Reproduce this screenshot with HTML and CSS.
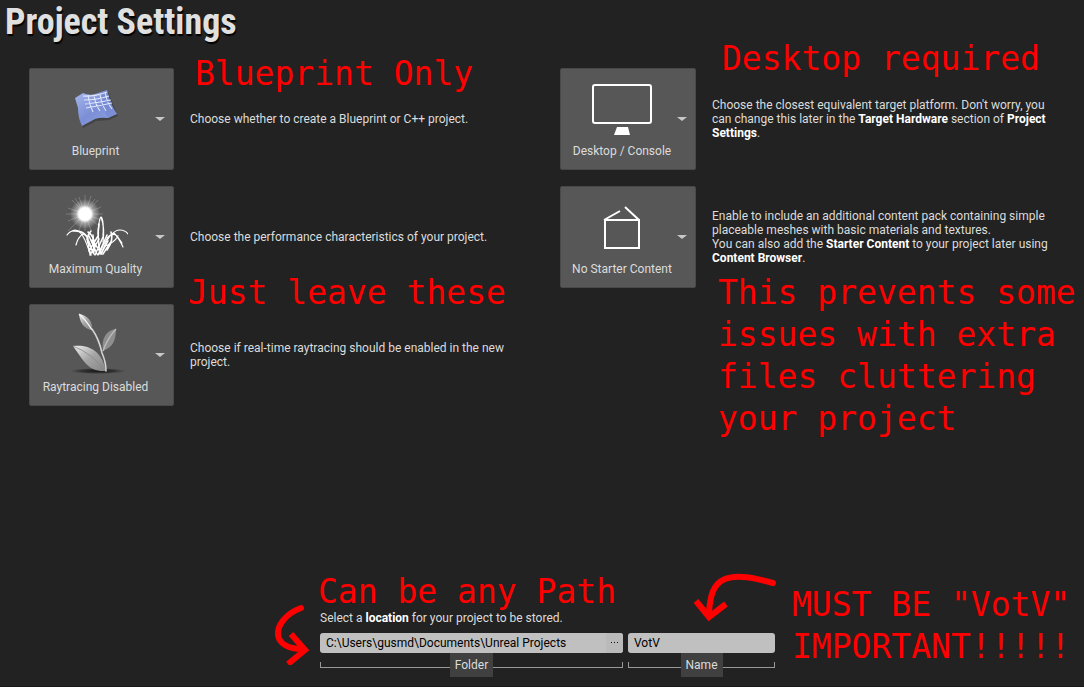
FILE: index.html
```
<!DOCTYPE html>
<html lang="en">
<head>
<meta charset="utf-8">
<meta name="viewport" content="width=device-width, initial-scale=1">
<title>Project Settings</title>
<link rel="stylesheet" href="styles.css">
</head>
<body>
<main class="page">
  <h1 class="title">Project Settings</h1>

  <div class="settings">
    <section class="column">
      <div class="setting">
        <button class="tile" type="button" aria-haspopup="listbox">
          <span class="choice">
            <svg class="icon" viewBox="0 0 64 64" aria-hidden="true">
              <defs>
                <linearGradient id="paper" x1="0" y1="0" x2="1" y2="1"><stop offset="0" stop-color="#a9b9ee"/><stop offset=".5" stop-color="#7c8fd6"/><stop offset="1" stop-color="#8fa2e4"/></linearGradient>
              </defs>
              <path d="M12 24L20 19L32 20L44 16L54 40L45 44L32 45L19 52L17 42Z" fill="#333" opacity=".55"/>
              <path d="M11 22L19 17Q25 20 31 18L43 14Q46 28 53 38L44 42Q36 41 31 43L18 50Q14 42 14 32Z" fill="url(#paper)"/>
              <path d="M31 18L43 14Q46 28 53 38L44 42Q38 32 37 17Z" fill="#667bc5" opacity=".35"/>
              <path d="M19 20Q30 21 43 16M20 24Q33 24 45 20M21 28Q33 27 47 24M22 32Q35 30 48 27M24 19Q25 28 29 36M30 19Q31 28 36 35M36 18Q37 27 42 35M41 16Q43 27 48 33" fill="none" stroke="#e9efff" stroke-width="1.1" opacity=".9"/>
            </svg>
            <span>Blueprint</span>
          </span>
          <span class="caret"></span>
        </button>
        <p class="description">Choose whether to create a Blueprint or C++ project.</p>
        <p class="note note-blueprint">Blueprint Only</p>
      </div>

      <div class="setting">
        <button class="tile" type="button" aria-haspopup="listbox">
          <span class="choice">
            <svg class="icon" viewBox="0 0 64 64" aria-hidden="true">
              <defs>
                <radialGradient id="sun"><stop offset="0" stop-color="#fff"/><stop offset=".42" stop-color="#fff"/><stop offset=".6" stop-color="#fff" stop-opacity=".45"/><stop offset="1" stop-color="#fff" stop-opacity="0"/></radialGradient>
              </defs>
              <circle cx="21" cy="20" r="15" fill="url(#sun)"/>
              <path d="M21 20V1M21 20V37M21 20H2M21 20H39M21 20L8 6M21 20L34 6M21 20L4 37M21 20L35 32M21 20L15 3M21 20L27 2M21 20L4 14M21 20L37 13M21 20L4 27M21 20L37 26M21 20L15 36M21 20L27 36M21 20L11 4M21 20L31 5" stroke="#fff" stroke-width=".7" opacity=".3"/>
              <g fill="none" stroke="#fff" stroke-width="1.2" stroke-linecap="round">
                <path d="M26 60Q19 36 11 36Q6 37 3 41M12 51Q14 43 19 40Q24 41 29 59M34 40Q35 24 37 23Q40 25 39 42M37 23Q41 34 39 48" />
                <path d="M38 58Q46 36 56 36Q61 36 64 40M36 59Q42 42 50 39Q55 44 59 53M43 44Q48 38 53 42L58 49M41 52Q50 49 54 42"/>
                <path d="M9 37Q19 36 24 44M27 37Q21 43 25 52M24 38Q30 41 31 53M35 30Q33 42 36 60M47 38Q50 46 43 56" stroke-width="1.6"/>
                <path d="M23 45L30 60M25 42L33 60M29 41L30 58M34 42L25 57M35 45L26 61M39 43L31 61M43 41L34 61M44 47L37 60M46 49L39 60M24 52L27 61M28 46L38 60" stroke-width="1.5"/>
              </g>
            </svg>
            <span>Maximum Quality</span>
          </span>
          <span class="caret"></span>
        </button>
        <p class="description">Choose the performance characteristics of your project.</p>
        <p class="note note-leave">Just leave these</p>
      </div>

      <div class="setting">
        <button class="tile" type="button" aria-haspopup="listbox">
          <span class="choice">
            <svg class="icon" viewBox="0 0 64 64" aria-hidden="true">
              <defs>
                <linearGradient id="leaf" x1="0" y1="0" x2="1" y2="1"><stop offset="0" stop-color="#eee"/><stop offset=".5" stop-color="#a5a5a5"/><stop offset="1" stop-color="#858585"/></linearGradient>
                <radialGradient id="shade"><stop offset="0" stop-color="#151515"/><stop offset=".6" stop-color="#292929" stop-opacity=".8"/><stop offset="1" stop-color="#333" stop-opacity="0"/></radialGradient>
              </defs>
              <ellipse cx="34" cy="59" rx="28" ry="3" fill="url(#shade)"/>
              <path d="M15 2C23 3 29 9 28 18C20 17 16 11 15 2Z" fill="url(#leaf)"/>
              <path d="M15 2Q22 8 28 18" fill="none" stroke="#f6f6f6" stroke-width="1.2"/>
              <path d="M52 17C42 18 37 27 39 39C49 35 52 28 52 17Z" fill="#8e8e8e"/>
              <path d="M52 17Q43 27 39 39" fill="none" stroke="#bbb" stroke-width="1.4"/>
              <path d="M9 34C24 32 38 38 42 59C24 60 20 49 9 34Z" fill="url(#leaf)"/>
              <path d="M9 34Q29 42 40 58" fill="none" stroke="#888" stroke-width=".8"/>
              <path d="M28 17Q35 27 38 41Q42 50 42 59" fill="none" stroke="#d4d4d4" stroke-width="1.6" stroke-linecap="round"/>
            </svg>
            <span>Raytracing Disabled</span>
          </span>
          <span class="caret"></span>
        </button>
        <p class="description">Choose if real-time raytracing should be enabled in the new project.</p>
      </div>
    </section>

    <section class="column column-narrow">
      <div class="setting">
        <button class="tile" type="button" aria-haspopup="listbox">
          <span class="choice">
            <svg class="icon" viewBox="0 0 64 64" aria-hidden="true">
              <rect x="3" y="9" width="58" height="38" rx="2" fill="none" stroke="#fff" stroke-width="2"/>
              <path d="M27 51H38L40 59H24Z" fill="#fff"/>
            </svg>
            <span>Desktop / Console</span>
          </span>
          <span class="caret"></span>
        </button>
        <p class="description">Choose the closest equivalent target platform. Don't worry, you can change this later in the <b>Target Hardware</b> section of <b>Project Settings</b>.</p>
        <p class="note note-desktop">Desktop required</p>
      </div>

      <div class="setting">
        <button class="tile" type="button" aria-haspopup="listbox">
          <span class="choice">
            <svg class="icon" viewBox="0 0 64 64" aria-hidden="true">
              <path d="M15 26H49V54H15ZM14 26L30 17M35 13L49 26" fill="none" stroke="#fff" stroke-width="2"/>
            </svg>
            <span>No Starter Content</span>
          </span>
          <span class="caret"></span>
        </button>
        <p class="description">Enable to include an additional content pack containing simple placeable meshes with basic materials and textures.<br>You can also add the <b>Starter Content</b> to your project later using <b>Content Browser</b>.</p>
        <p class="note note-clutter">This prevents some<br>issues with extra<br>files cluttering<br>your project</p>
      </div>
    </section>
  </div>

  <form class="location">
    <p class="location-text">Select a <b>location</b> for your project to be stored.</p>
    <div class="fields">
      <div class="field">
        <div class="box">
          <input id="folder" class="input" type="text" value="C:\Users\gusmd\Documents\Unreal Projects" spellcheck="false">
          <button class="browse" type="button" aria-label="Browse"><svg width="8" height="2" viewBox="0 0 8 2" aria-hidden="true"><path d="M0 0H1V1H0ZM3 0H4V1H3ZM6 0H7V1H6Z" fill="#111"/></svg></button>
        </div>
        <label class="bracket" for="folder"><span class="tag">Folder</span></label>
      </div>
      <div class="field">
        <div class="box">
          <input id="name" class="input" type="text" value="VotV" spellcheck="false">
        </div>
        <label class="bracket" for="name"><span class="tag">Name</span></label>
      </div>
    </div>
    <p class="note note-path">Can be any Path</p>
    <p class="note note-name">MUST BE "VotV"<br>IMPORTANT!!!!!</p>
    <svg class="arrow arrow-folder" viewBox="0 0 40 64" aria-hidden="true">
      <path d="M31 7C15 13 7 25 8 34C9 43 19 48 32 48" stroke-linecap="round"/>
      <path d="M21 33L35 49L18 63"/>
    </svg>
    <svg class="arrow arrow-name" viewBox="0 0 84 50" aria-hidden="true">
      <path d="M80 11C62 6 44 2 32 7C20 12 17 24 16 41" stroke-linecap="round"/>
      <path d="M3 29L16 45L33 32"/>
    </svg>
  </form>
</main>
</body>
</html>
```
FILE: styles.css
```
* {
  box-sizing: border-box;
}

body {
  margin: 0;
  background: #222;
  color: #dcdcdc;
  font: 12px/14px Roboto, "Liberation Sans", sans-serif;
}

h1,
p {
  margin: 0;
}

button,
input {
  font: inherit;
  color: inherit;
}

b {
  color: #fff;
  font-weight: 700;
}

.page {
  display: flex;
  flex-direction: column;
  min-height: 100vh;
  border-bottom: 1px solid #181818;
  overflow: hidden;
}

.title {
  padding: 0 5px;
  color: #e0e0e0;
  font: 700 36px/44px "Roboto Condensed", "Liberation Sans Narrow", Roboto, sans-serif;
  text-shadow: 1px 2px 1px #000;
}

.settings {
  display: grid;
  grid-template-columns: 491fr 500fr;
  gap: 40px;
  padding: 24px 24px 24px 29px;
}

.column {
  display: flex;
  flex-direction: column;
  gap: 16px;
}

.setting {
  position: relative;
  display: grid;
  grid-template-columns: 145px 1fr;
  gap: 16px;
  align-items: center;
}

.column-narrow .setting {
  grid-template-columns: 136px 1fr;
}

.tile {
  display: flex;
  align-items: center;
  padding: 0 8px 0 6px;
  border: 1px solid #494949;
  border-radius: 2px;
  background: #575757;
}

.choice {
  flex: 1;
  display: flex;
  flex-direction: column;
  align-items: center;
  gap: 4px;
  padding: 7px 0 11px;
  white-space: nowrap;
}

.icon {
  width: 64px;
  height: 64px;
}

.caret {
  border: 5px solid transparent;
  border-top: 4px solid #c8c8c8;
  border-bottom: 0;
}

.description {
  max-width: 350px;
}

.note {
  position: absolute;
  color: #f00;
  font: 33px/42px "DejaVu Sans Mono", monospace;
  white-space: nowrap;
  pointer-events: none;
}

.note-blueprint {
  left: 166px;
  top: -15px;
}

.note-leave {
  left: 159px;
  top: 86px;
}

.note-desktop {
  left: 162px;
  top: -30px;
}

.note-clutter {
  left: 158px;
  top: 86px;
}

.location {
  position: relative;
  align-self: center;
  width: 455px;
  margin: auto 0 9px 11px;
}

.location-text {
  padding-bottom: 8px;
}

.fields {
  display: grid;
  grid-template-columns: 303fr 147fr;
  gap: 5px;
}

.field {
  min-width: 0;
}

.box {
  display: flex;
  height: 20px;
  border-radius: 3px;
  background: #c0c0c0;
  color: #000;
  overflow: hidden;
}

.input {
  flex: 1;
  min-width: 0;
  padding: 0 6px;
  border: 0;
  background: none;
}

.browse {
  display: grid;
  place-items: center;
  width: 17px;
  padding: 0;
  border: 0;
  background: #bababa;
}

.bracket {
  display: flex;
  align-items: center;
}

.bracket::before,
.bracket::after {
  content: "";
  flex: 1;
  height: 5px;
  border: 0 solid #999;
  border-bottom-width: 1px;
}

.bracket::before {
  border-left-width: 1px;
}

.bracket::after {
  border-right-width: 1px;
}

.tag {
  padding: 5px;
  background: #404040;
}

.note-path {
  left: -2px;
  top: -40px;
}

.note-name {
  left: 472px;
  top: -27px;
}

.arrow {
  position: absolute;
  fill: none;
  stroke: #f00;
  stroke-width: 6px;
  pointer-events: none;
}

.arrow-folder {
  left: -50px;
  top: -10px;
  width: 40px;
  height: 64px;
}

.arrow-name {
  left: 373px;
  top: -39px;
  width: 84px;
  height: 50px;
}
```
